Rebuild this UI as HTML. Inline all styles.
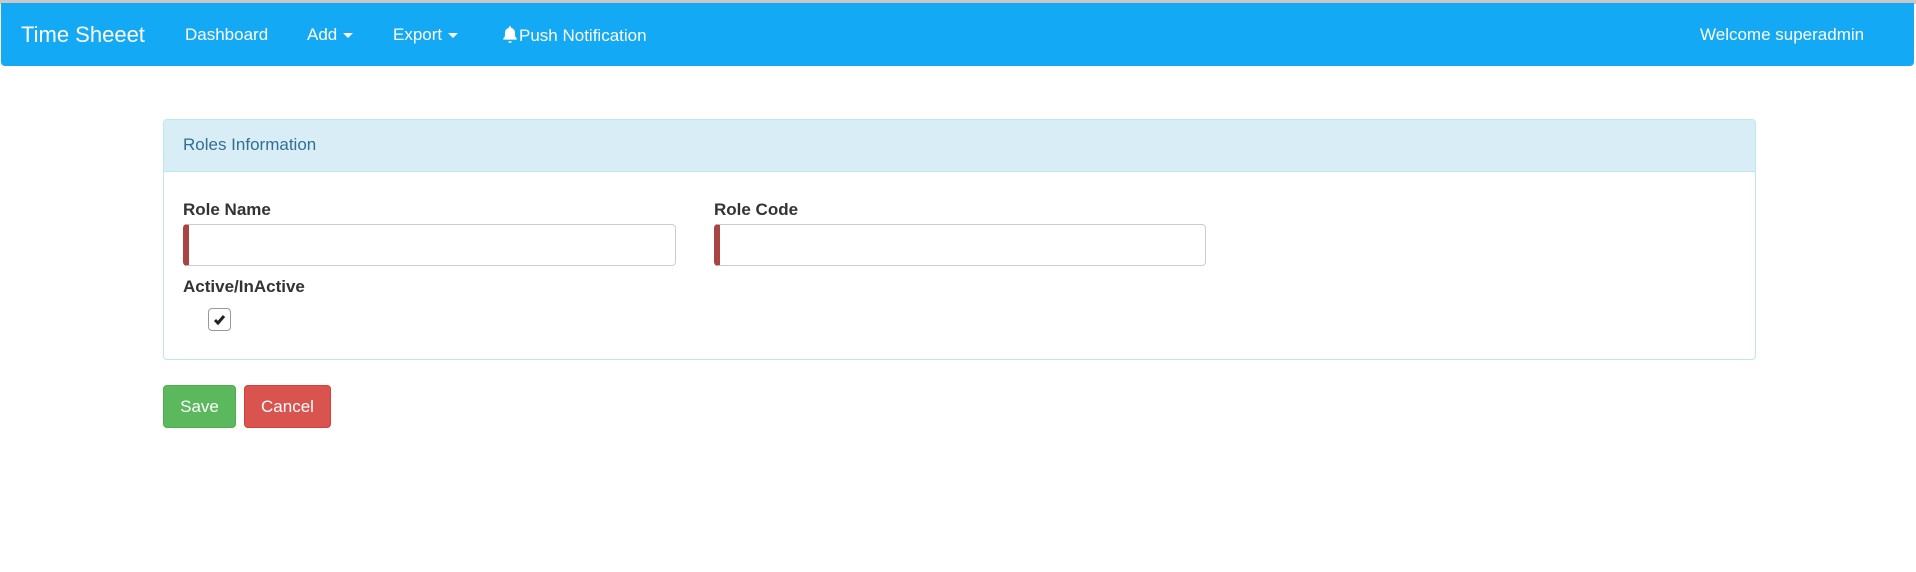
<!DOCTYPE html>
<html><head><meta charset="utf-8"><style>
*{box-sizing:border-box;margin:0;padding:0}
body{width:1916px;height:572px;background:#fff;font-family:"Liberation Sans",Arial,sans-serif;position:relative;overflow:hidden;color:#333}
.topline{position:absolute;left:0;top:0;width:1916px;height:4px;background:#c8c8c8}
.nav{position:absolute;left:1px;top:3px;width:1913px;height:63px;background:#13a9f4;border-radius:0 0 4px 4px;color:#fff}
.nav span{position:absolute;top:22px;font-size:17px;line-height:20px;white-space:nowrap}
.brand{font-size:22px!important;top:22px!important}
.caret{display:inline-block;width:0;height:0;border-left:5px solid transparent;border-right:5px solid transparent;border-top:5px solid #fff;vertical-align:middle;margin-left:6px}
.panel{position:absolute;left:163px;top:119px;width:1593px;height:241px;border:1px solid #bce8f1;border-radius:4px}
.ph{height:52px;background:#d9edf7;border-bottom:1px solid #bce8f1;color:#31708f;font-size:17px;padding:15px 0 0 19px;border-radius:3px 3px 0 0}
.lbl{position:absolute;font-weight:bold;font-size:17px;color:#333}
.inp{position:absolute;height:42px;border:1px solid #ccc;border-left:6px solid #a94442;border-radius:4px;background:#fff}
.cb{position:absolute;left:208px;top:308px;width:23px;height:23px;border:1px solid #999;border-radius:4px;background:#fff}
.btn{position:absolute;top:385px;height:43px;border-radius:4px;color:#fff;font-size:17px;text-align:center;line-height:41px}
</style></head><body>
<div class="topline"></div>
<div class="nav">
<span class="brand" style="left:20px">Time Sheeet</span>
<span style="left:184px">Dashboard</span>
<span style="left:306px">Add<i class="caret"></i></span>
<span style="left:392px">Export<i class="caret"></i></span>
<span style="left:500px"><svg width="18" height="18" viewBox="0 0 16 16" style="vertical-align:-2px"><path d="M8 1a1 1 0 0 1 1 1v.5c2.3.5 3.5 2.4 3.5 4.5v3l1.5 2v1H2v-1l1.5-2V7c0-2.1 1.2-4 3.5-4.5V2a1 1 0 0 1 1-1zM6.5 14.5h3a1.5 1.5 0 0 1-3 0z" fill="#fff"/></svg>Push Notification</span>
<span style="left:1699px">Welcome superadmin</span>
</div>
<div class="panel"><div class="ph">Roles Information</div></div>
<div class="lbl" style="left:183px;top:200px">Role Name</div>
<div class="inp" style="left:183px;top:224px;width:493px"></div>
<div class="lbl" style="left:714px;top:200px">Role Code</div>
<div class="inp" style="left:714px;top:224px;width:492px"></div>
<div class="lbl" style="left:183px;top:277px">Active/InActive</div>
<div class="cb"><svg width="21" height="21" viewBox="0 0 21 21"><path d="M6 11l3 3 6-7" stroke="#222" stroke-width="3" fill="none"/></svg></div>
<div class="btn" style="left:163px;width:73px;background:#5cb85c;border:1px solid #4cae4c">Save</div>
<div class="btn" style="left:244px;width:87px;background:#d9534f;border:1px solid #d43f3a">Cancel</div>
</body></html>
